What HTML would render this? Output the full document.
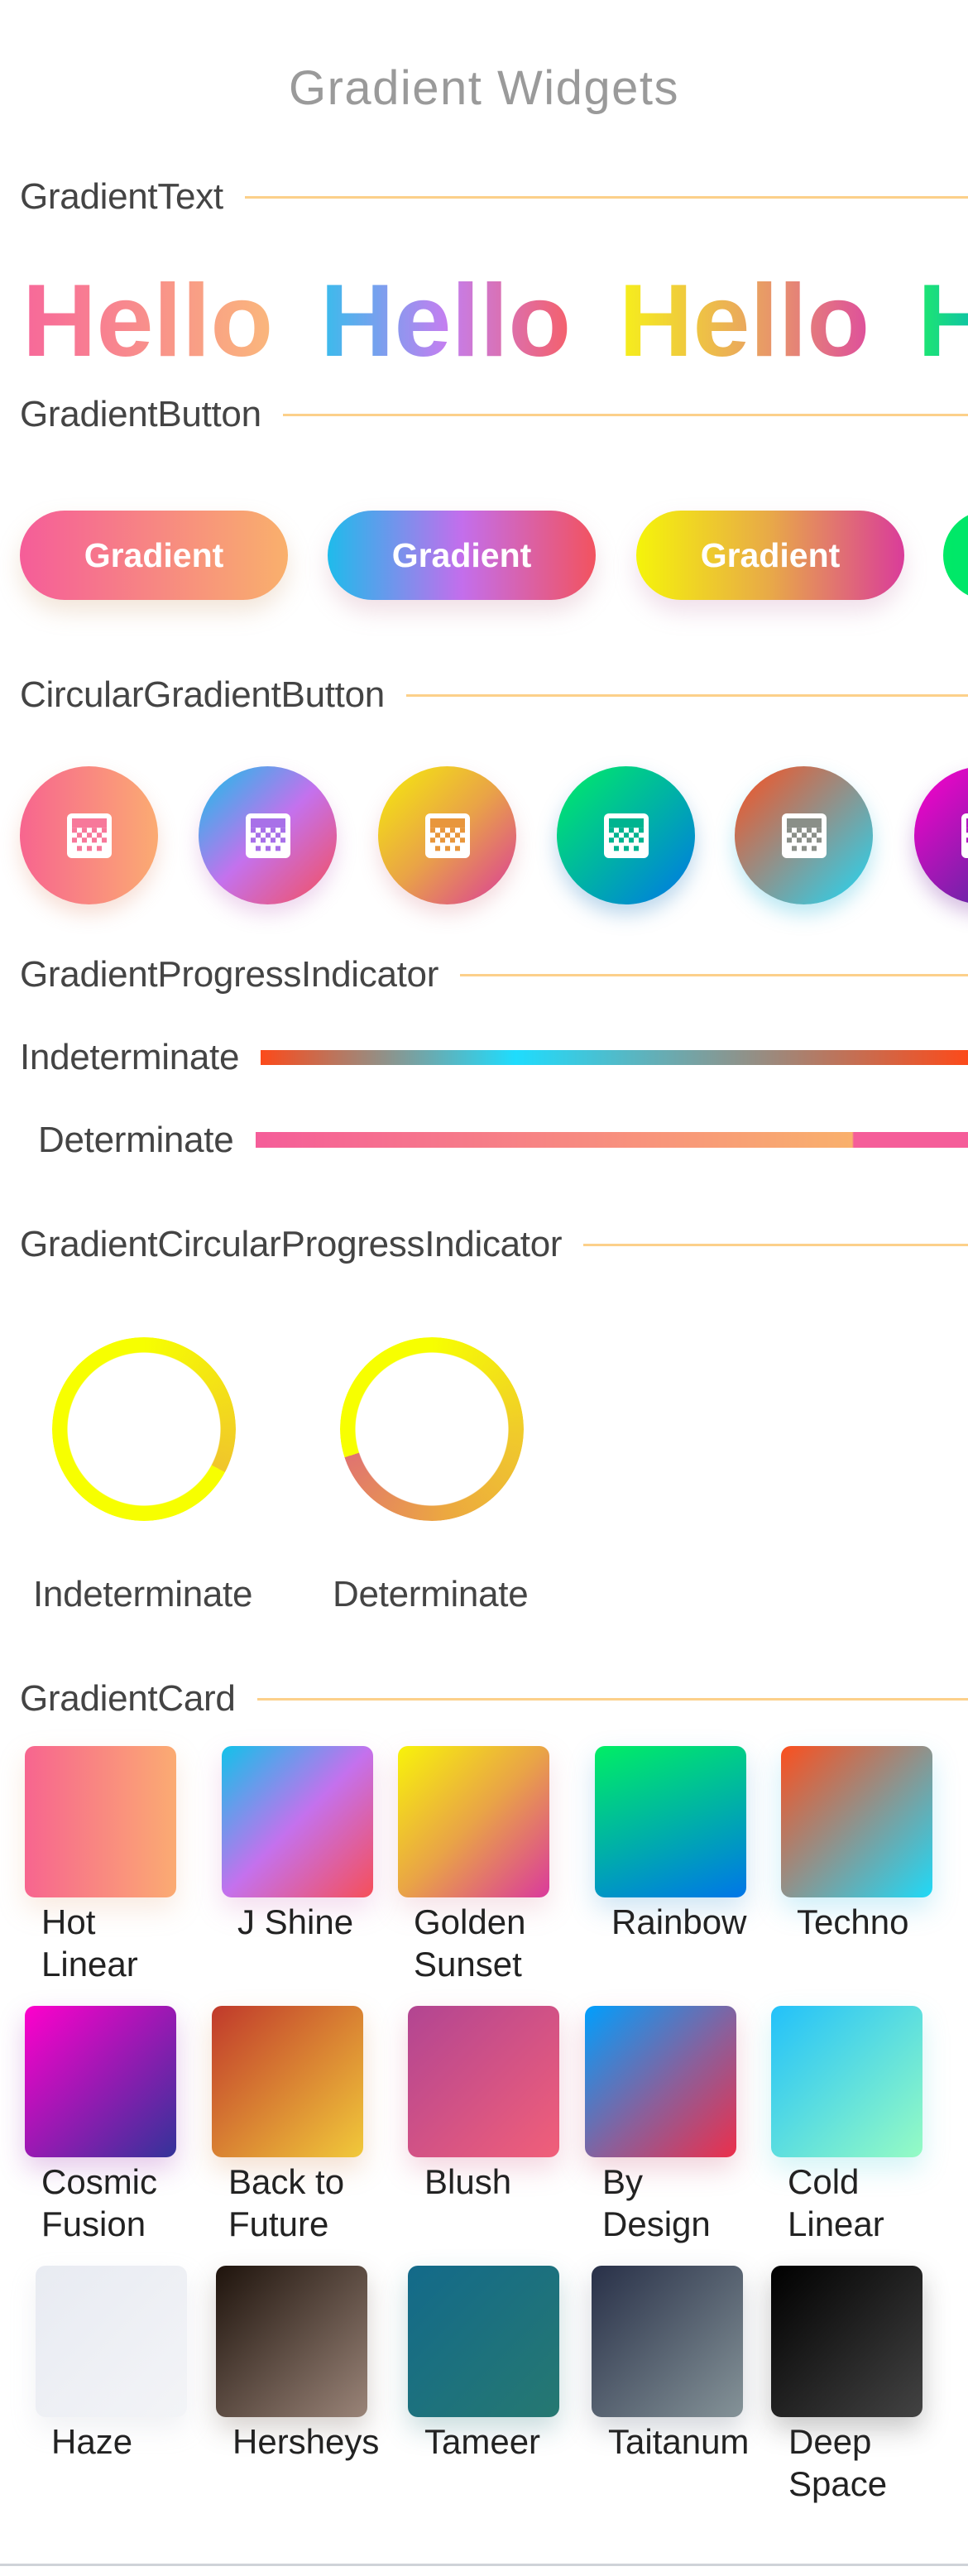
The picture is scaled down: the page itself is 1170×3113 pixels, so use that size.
<!DOCTYPE html>
<html><head><meta charset="utf-8">
<style>
html,body{margin:0;padding:0;background:#fff;width:1170px;height:3113px;overflow:hidden;position:relative;font-family:"Liberation Sans",sans-serif}
.a{position:absolute}
.title{left:0;width:1170px;top:74px;text-align:center;font-size:58px;color:#9a9a9a;letter-spacing:1.5px;line-height:66px}
.sec{left:24px;right:0;height:50px;display:flex;align-items:center;overflow:hidden}
.sec span{font-size:44px;color:#444;white-space:nowrap;letter-spacing:-0.3px}
.sec i{flex:1;height:3px;background:#fcd08a;margin-left:26px}
.hello{font-weight:bold;font-size:124px;line-height:140px;top:318px;-webkit-background-clip:text;background-clip:text;color:transparent;white-space:nowrap}
.btn{top:617px;height:108px;width:324px;border-radius:54px;color:#fff;font-weight:bold;font-size:41px;display:flex;align-items:center;justify-content:center}
.cb{top:926px;width:167px;height:167px;border-radius:50%}
.cb svg{position:absolute;left:57px;top:57px}
.ring{width:222px;height:222px;border-radius:50%;top:1616px;-webkit-mask:radial-gradient(circle,transparent 92px,#000 93px);mask:radial-gradient(circle,transparent 92px,#000 93px)}
.lbl{font-size:44px;color:#444;letter-spacing:-0.3px}
.card{width:183px;height:183px;border-radius:12px}
.ct{font-size:42px;color:#222;line-height:51px}
#clip{position:absolute;left:0;top:0;width:1170px;height:3113px;overflow:hidden}
</style></head><body>
<div id="clip">
<div class="a title">Gradient Widgets</div>

<div class="a sec" style="top:213px"><span>GradientText</span><i></i></div>
<div class="a hello" style="left:27px;background-image:linear-gradient(90deg,#f7689a,#fab77c)">Hello</div>
<div class="a hello" style="left:387px;background-image:linear-gradient(90deg,#37bdec,#c37ff0 50%,#f5606a)">Hello</div>
<div class="a hello" style="left:748px;background-image:linear-gradient(90deg,#f6f01a,#eaa95c 50%,#de4f9c)">Hello</div>
<div class="a hello" style="left:1109px;width:61px;overflow:hidden;background-image:linear-gradient(90deg,#1ee86e,#10c6a0)">Hello</div>

<div class="a sec" style="top:476px"><span>GradientButton</span><i></i></div>
<div class="a btn" style="left:24px;background:linear-gradient(90deg,#f55d99,#f9b06c);box-shadow:0 14px 28px rgba(210,160,120,.28)">Gradient</div>
<div class="a btn" style="left:396px;background:linear-gradient(90deg,#1fbbeb,#c36eec 50%,#f2535f);box-shadow:0 14px 28px rgba(200,140,160,.28)">Gradient</div>
<div class="a btn" style="left:769px;background:linear-gradient(90deg,#f5f40a,#e8a948 50%,#da3c9a);box-shadow:0 14px 28px rgba(200,140,180,.28)">Gradient</div>
<div class="a btn" style="left:1140px;background:linear-gradient(90deg,#00ea66,#00c08a)"></div>

<div class="a sec" style="top:815px"><span>CircularGradientButton</span><i></i></div>

<div class="a sec" style="top:1153px"><span>GradientProgressIndicator</span><i></i></div>
<div class="a lbl" style="left:24px;top:1253px">Indeterminate</div>
<div class="a" style="left:315px;top:1269px;width:855px;height:18px;background:linear-gradient(90deg,#fc4a1a 0%,#1fdcfd 36%,#fc4a1a 100%)"></div>
<div class="a lbl" style="left:46px;top:1353px">Determinate</div>
<div class="a" style="left:309px;top:1368px;width:861px;height:19px;background:linear-gradient(90deg,#f55d99 0,#f9b06c 721px,#f55d99 723px,#f55d99 100%)"></div>

<div class="a sec" style="top:1479px"><span>GradientCircularProgressIndicator</span><i></i></div>
<div class="a ring" style="left:63px;background:conic-gradient(#f7ff00 0deg,#f0c52c 118deg,#f7ff00 118deg,#f7ff00 360deg)"></div>
<div class="a ring" style="left:411px;background:conic-gradient(#f7ff00 0deg,#f0cc2a 90deg,#eca840 170deg,#e07470 252deg,#f7ff00 252deg,#f7ff00 360deg)"></div>
<div class="a lbl" style="left:40px;top:1902px">Indeterminate</div>
<div class="a lbl" style="left:402px;top:1902px">Determinate</div>

<div class="a sec" style="top:2028px"><span>GradientCard</span><i></i></div>

<div id="cards"></div>
<div class="a" style="left:0;top:3098px;width:1170px;height:3px;background:#cfd3d8"></div>
</div>
<script>
var cb=[
[24,'linear-gradient(90deg,#f7658f,#fbab72)','#f7789a','rgba(230,150,120,.3)'],
[240,'linear-gradient(135deg,#12c2e9,#c471ed 50%,#f64f59)','#a870e8','rgba(200,120,200,.3)'],
[457,'linear-gradient(135deg,#f6ed0a,#e9a347 50%,#da3a9c)','#e8963c','rgba(220,140,150,.3)'],
[673,'linear-gradient(135deg,#00ee65,#00b3a4 50%,#0076e8)','#00b490','rgba(60,140,200,.35)'],
[888,'linear-gradient(135deg,#fb4f1e,#8e938d 50%,#1fd9f7)','#8a8f88','rgba(60,190,220,.35)'],
[1105,'linear-gradient(135deg,#ff00cc,#333399)','#b018c0','rgba(120,40,160,.3)']];
var h='';
function icon(c){var s='<svg width="54" height="54" viewBox="0 0 54 54"><rect x="0" y="0" width="54" height="54" rx="6" fill="#fff"/><rect x="6" y="6" width="42" height="11.3" fill="'+c+'"/>';
var rows=[[17.3,[0,2,4,6]],[23.3,[1,3,5]],[29.3,[0,2,4,6]],[39.3,[1,3,5]]];
rows.forEach(function(r){r[1].forEach(function(k){s+='<rect x="'+(6+k*6)+'" y="'+r[0]+'" width="6" height="6" fill="'+c+'"/>';});});
return s+'</svg>';}
cb.forEach(function(b){h+='<div class="a cb" style="left:'+b[0]+'px;background:'+b[1]+';box-shadow:0 12px 24px '+b[3]+'">'+icon(b[2])+'</div>';});
var cards=[
[30,2110,'linear-gradient(90deg,#f7658f,#fbab72)','Hot<br>Linear',50,'rgba(230,170,130,.25)'],
[268,2110,'linear-gradient(135deg,#12c2e9,#c471ed 50%,#f64f59)','J Shine',287,'rgba(210,120,190,.25)'],
[481,2110,'linear-gradient(135deg,#f8f30a,#e9a347 50%,#da3a9c)','Golden<br>Sunset',500,'rgba(220,140,160,.25)'],
[719,2110,'linear-gradient(160deg,#00ee65,#00b3a4 50%,#0076e8)','Rainbow',739,'rgba(60,150,210,.25)'],
[944,2110,'linear-gradient(135deg,#fb4f1e,#8e938d 50%,#1fd9f7)','Techno',963,'rgba(60,190,230,.25)'],
[30,2424,'linear-gradient(135deg,#ff00cc,#333399)','Cosmic<br>Fusion',50,'rgba(150,40,170,.25)'],
[256,2424,'linear-gradient(135deg,#c0392b,#f1c93a)','Back to<br>Future',276,'rgba(210,130,70,.25)'],
[493,2424,'linear-gradient(135deg,#b24592,#f15f79)','Blush',513,'rgba(210,90,130,.25)'],
[707,2424,'linear-gradient(135deg,#009ffd,#8b5f9a 55%,#ec2f4b)','By<br>Design',728,'rgba(200,80,110,.25)'],
[932,2424,'linear-gradient(135deg,#22c1fa,#96fbc4)','Cold<br>Linear',952,'rgba(80,210,220,.25)'],
[43,2738,'linear-gradient(135deg,#e8ebf2,#f3f4f7)','Haze',62,'rgba(180,185,200,.2)'],
[261,2738,'linear-gradient(135deg,#1e130c,#9a8478)','Hersheys',281,'rgba(90,70,60,.25)'],
[493,2738,'linear-gradient(135deg,#136a8a,#267871)','Tameer',513,'rgba(30,110,120,.25)'],
[715,2738,'linear-gradient(135deg,#283048,#859398)','Taitanum',735,'rgba(80,90,110,.25)'],
[932,2738,'linear-gradient(135deg,#000000,#434343)','Deep<br>Space',953,'rgba(30,30,30,.25)']];
cards.forEach(function(c){h+='<div class="a card" style="left:'+c[0]+'px;top:'+c[1]+'px;background:'+c[2]+';box-shadow:0 14px 32px '+c[5]+'"></div>';
h+='<div class="a ct" style="left:'+c[4]+'px;top:'+(c[1]+187)+'px">'+c[3]+'</div>';});
document.getElementById('cards').innerHTML=h;
</script>
</body></html>
